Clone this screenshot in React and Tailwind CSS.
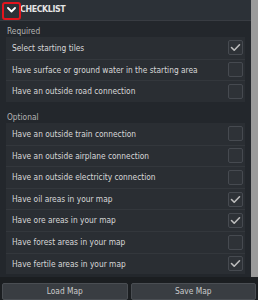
import React from 'react';

const required = [
    { label: 'Select starting tiles', checked: true },
    { label: 'Have surface or ground water in the starting area', checked: false },
    { label: 'Have an outside road connection', checked: false },
];

const optional = [
    { label: 'Have an outside train connection', checked: false },
    { label: 'Have an outside airplane connection', checked: false },
    { label: 'Have an outside electricity connection', checked: false },
    { label: 'Have oil areas in your map', checked: true },
    { label: 'Have ore areas in your map', checked: true },
    { label: 'Have forest areas in your map', checked: false },
    { label: 'Have fertile areas in your map', checked: true },
];

const CheckBox = ({ checked }) => (
    <div className="w-[15px] h-[15px] rounded-[2px] border border-[#464a50] bg-[#2e3237] flex items-center justify-center">
        {checked && (
            <svg width="11" height="11" viewBox="0 0 11 11" fill="none">
                <path d="M1.5 5.5 L4.2 8.2 L9.5 2.8" stroke="#bdbdbd" strokeWidth="1.6" strokeLinecap="round" strokeLinejoin="round" />
            </svg>
        )}
    </div>
);

const Group = ({ items }) => (
    <div className="mx-[6px] bg-[#2a2e33] flex flex-col">
        {items.map((item, i) => (
            <div
                key={item.label}
                className={`h-[21.6px] flex items-center justify-between pl-[6px] pr-[2px] ${i > 0 ? 'border-t border-[#33373c]' : ''}`}
            >
                <span className="text-[8.3px] text-[#d8d8d8] whitespace-nowrap">{item.label}</span>
                <CheckBox checked={item.checked} />
            </div>
        ))}
    </div>
);

export default function App() {
    return (
        <div className="w-[258px] h-[300px] bg-[#1b1e21] flex flex-col overflow-hidden" style={{ fontFamily: '"DejaVu Sans Condensed", "DejaVu Sans", sans-serif' }}>
            <div className="flex h-[277px]">
                <div className="flex-1 bg-[#23272c] flex flex-col">
                    {/* Header */}
                    <div className="relative h-[21px] bg-[#2c3137] border-b border-[#383c42] flex items-center">
                        <svg className="ml-[7px]" width="9" height="6" viewBox="0 0 9 6" fill="none">
                            <path d="M1 1 L4.5 4.5 L8 1" stroke="#ffffff" strokeWidth="1.8" strokeLinecap="round" strokeLinejoin="round" />
                        </svg>
                        <span className="ml-[4px] text-[8.8px] font-bold tracking-[-0.4px] text-[#e4e4e4]">CHECKLIST</span>
                        <div className="absolute left-[2px] top-[2px] w-[19px] h-[18px] rounded-[3px] border-2 border-[#e3141d]" />
                    </div>

                    {/* Required */}
                    <div className="h-[16px] pt-[4px] pl-[7px] leading-[12px] text-[8.3px] text-[#b4b4b4]">Required</div>
                    <Group items={required} />

                    {/* Optional */}
                    <div className="h-[21.2px] pt-[9px] pl-[7px] leading-[12px] text-[8.3px] text-[#b4b4b4]">Optional</div>
                    <Group items={optional} />
                </div>
                <div className="w-[7px] bg-[#9b9b9b]" />
            </div>

            {/* Buttons */}
            <div className="flex gap-[3px] px-[2px] pt-[6px]">
                <button className="flex-1 h-[17px] rounded-[2px] bg-[#393d42] border border-[#4a4e53] text-[8.3px] text-[#cacaca]">Load Map</button>
                <button className="flex-1 h-[17px] rounded-[2px] bg-[#393d42] border border-[#4a4e53] text-[8.3px] text-[#cacaca]">Save Map</button>
            </div>
        </div>
    );
}
